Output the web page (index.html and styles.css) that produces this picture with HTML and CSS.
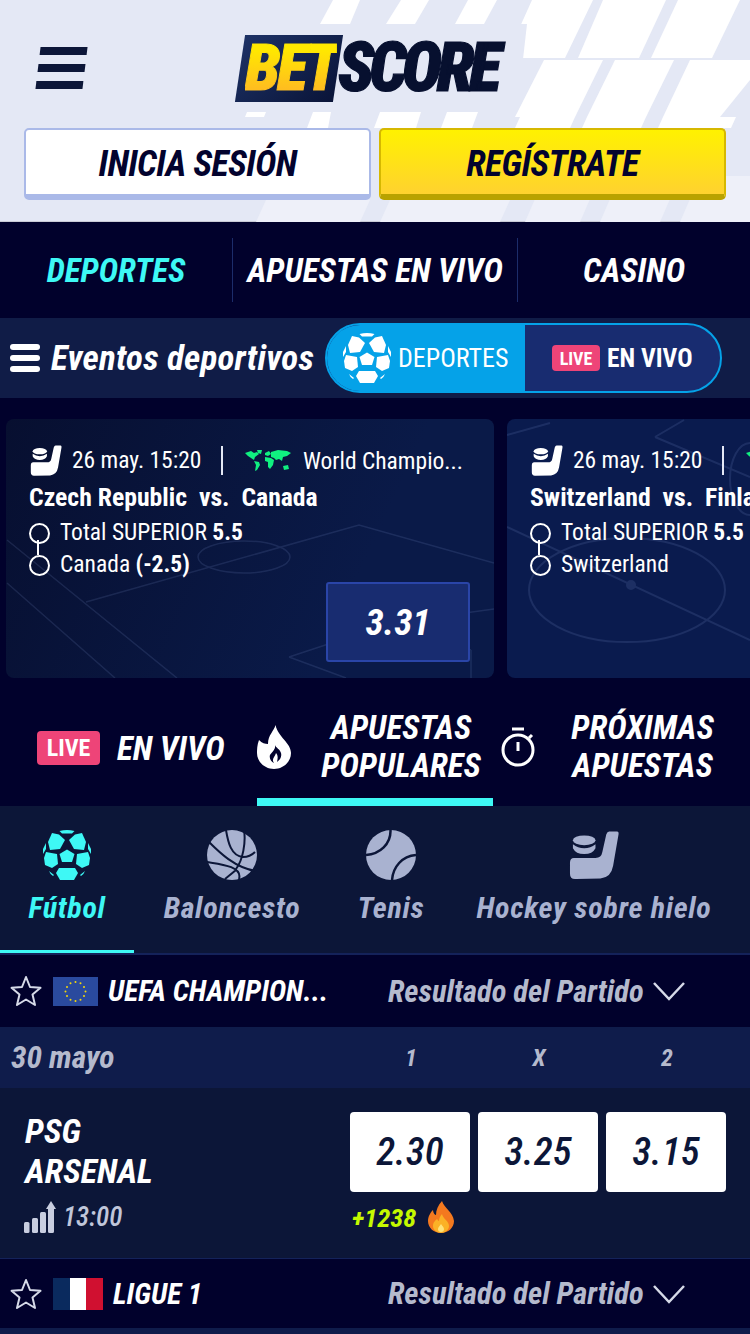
FILE: index.html
```html
<!DOCTYPE html>
<html lang="es">
<head>
  <meta charset="UTF-8">
  <meta name="viewport" content="width=device-width, initial-scale=1.0">
  <title>Betscore</title>
  <link rel="stylesheet" href="styles.css">
</head>
<body>
  <svg class="defs" width="0" height="0">
    <symbol id="ball" viewBox="0 0 50 50">
      <path d="M17.500 1Q25 -1 32.500 1L30 3.500H20Z"/>
      <path d="M10 3L17 4.500 23 10 18 19 8 20 6 12Z"/>
      <path d="M40 3L33 4.500 27 10 32 19 42 20 44 12Z"/>
      <path d="M25 19.500L32.500 24 30 32H20L17.500 24Z"/>
      <path d="M4 22L15 24 16 34 10 38 3 35 2 28Z"/>
      <path d="M46 22L35 24 34 34 40 38 47 35 48 28Z"/>
      <path d="M17 38H33L36 43 32 50H18L14 43Z"/>
      <path d="M1 19L4 13 4 19 1 24Z"/>
      <path d="M49 19L46 13 46 19 49 24Z"/>
      <path d="M7 41L12 45 11 46Q8 44 7 41Z"/>
      <path d="M43 41L38 45 39 46Q42 44 43 41Z"/>
    </symbol>
    <symbol id="puck" viewBox="0 0 51 50">
      <path d="M41 1H49Q51 1 50.500 4L45 36Q43 48 32 49L7 49.500Q1 50 1 44V33Q1 28 5 28H27Q33 28 34 22L38 4Q39 1 41 1Z"/>
      <ellipse cx="15.500" cy="10" rx="11.500" ry="5"/>
      <path d="M4 14Q9 18 15.500 18T27 14V18Q24 24 15.500 24T4 18Z"/>
    </symbol>
    <symbol id="star" viewBox="0 0 32 32">
      <path d="M16 2L20 12 30.500 12.800 22.500 19.500 25 30 16 24.500 7 30 9.500 19.500 1.500 12.800 12 12Z" fill="none" stroke="currentColor" stroke-width="2" stroke-linejoin="round"/>
    </symbol>
    <symbol id="chevron" viewBox="0 0 32 20">
      <path d="M1 2L16 18 31 2" fill="none" stroke="currentColor" stroke-width="2.500"/>
    </symbol>
    <symbol id="pitch-a" viewBox="0 0 488 259">
      <g fill="none" stroke="#8fa6e0" stroke-width="1.500">
        <path d="M80 183L353 106 488 144"/>
        <path d="M1 121L171 259M1 164L109 259"/>
        <ellipse cx="238" cy="138" rx="46" ry="16"/>
        <path d="M283 238L386 204 465 231M283 238L340 259M386 204L488 190M465 231V259"/>
      </g>
    </symbol>
    <symbol id="pitch-b" viewBox="0 0 243 259">
      <g fill="none" stroke="#8fa6e0" stroke-width="2">
        <ellipse cx="120" cy="171" rx="98" ry="52"/>
        <path d="M0 108L243 221M0 16L43 4M148 18L177 1M148 18L243 58"/>
        <circle cx="124" cy="166" r="4" fill="#8fa6e0"/>
        <ellipse cx="243" cy="60" rx="20" ry="36"/>
      </g>
    </symbol>
    <symbol id="map" viewBox="0 0 46 21">
      <path d="M0 3L6 1 9 3 12 2 14 4 10 7 9 10 6 8 3 6Z"/>
      <path d="M12 0L17 0 16 4 13 3Z"/>
      <path d="M9 11L14 12 15 15 12 20 10 21 11 15Z"/>
      <path d="M20 3L24 1 26 4 23 6 20 5Z"/>
      <path d="M26 2L33 0 42 1 46 3 42 6 38 7 37 11 34 9 31 10 29 8 26 7Z"/>
      <path d="M20 7L26 8 29 10 28 15 25 19 23 17 23 12 20 11Z"/>
      <path d="M38 16L43 15 44 19 39 20Z"/>
    </symbol>
  </svg>

  <header class="top">
    <svg class="stripes" viewBox="0 0 750 222" preserveAspectRatio="none">
      <g fill="#fff">
        <path d="M333 0H360L350 24H320Z"/>
        <path d="M401 0H429L415 24H386Z"/>
        <path d="M468 0H497L484 24H455Z"/>
        <path d="M532 0H593L565 58H506Z"/>
        <path d="M603 0H666L639 58H578Z"/>
        <path d="M678 0H740L712 58H651Z"/>
        <path d="M544 60H603L575 117H515Z"/>
        <path d="M615 60H674L646 117H587Z"/>
        <path d="M690 60H750V80L720 117H663Z"/>
        <path d="M247 112H266L264 117H245Z"/>
        <path d="M313 112H331L328 128H307Z"/>
        <path d="M380 112H421L416 128H374Z"/>
        <path d="M447 112H478L472 128H441Z"/>
        <path d="M520 117H575L570 128H515Z"/>
        <path d="M587 117H646L641 128H582Z"/>
        <path d="M663 117H736L731 128H658Z"/>
      </g>
      <path fill="#e4e8f5" d="M236 24H527L517 112H225Z"/>
      <g fill="#eef0f9">
        <path d="M256 222L266 200H370L360 222Z"/>
        <path d="M380 222L390 200H510L500 222Z"/>
        <path d="M525 222L545 176H600L580 222Z"/>
        <path d="M600 222L620 176H680L660 222Z"/>
        <path d="M680 222L700 176H750V222Z"/>
      </g>
    </svg>
    <div class="top-row">
      <div class="burger"><i></i><i></i><i></i></div>
      <div class="logo">
        <span class="logo-bet"><span>BET</span></span>
        <span class="logo-score">SCORE</span>
      </div>
    </div>
    <div class="auth">
      <div class="auth-btn login">INICIA SESIÓN</div>
      <div class="auth-btn signup">REGÍSTRATE</div>
    </div>
  </header>

  <nav class="main-nav">
    <a class="active">DEPORTES</a>
    <a>APUESTAS EN VIVO</a>
    <a>CASINO</a>
  </nav>

  <section class="events-bar">
    <div class="mini-burger"><i></i><i></i><i></i></div>
    <h2>Eventos deportivos</h2>
    <div class="toggle">
      <div class="toggle-sports">
        <svg class="toggle-ball"><use href="#ball"/></svg>
        <span>DEPORTES</span>
      </div>
      <div class="toggle-live">
        <span class="live small">LIVE</span>
        <b>EN VIVO</b>
      </div>
    </div>
  </section>

  <section class="slider">
    <article class="card card-dark">
      <svg class="pitch"><use href="#pitch-a"/></svg>
      <div class="card-head">
        <svg class="card-puck"><use href="#puck"/></svg>
        <span class="card-date">26 may. 15:20</span>
        <i class="sep"></i>
        <svg class="card-map"><use href="#map"/></svg>
        <span class="card-league">World Champio...</span>
      </div>
      <div class="card-teams">Czech Republic&nbsp; vs.&nbsp; Canada</div>
      <div class="legs">
        <div class="leg">Total SUPERIOR <b>5.5</b></div>
        <div class="leg">Canada <b>(-2.5)</b></div>
      </div>
      <div class="card-odd">3.31</div>
    </article>
    <article class="card">
      <svg class="pitch pitch-right"><use href="#pitch-b"/></svg>
      <div class="card-head">
        <svg class="card-puck"><use href="#puck"/></svg>
        <span class="card-date">26 may. 15:20</span>
        <i class="sep"></i>
        <svg class="card-map"><use href="#map"/></svg>
        <span class="card-league">World Champio...</span>
      </div>
      <div class="card-teams">Switzerland&nbsp; vs.&nbsp; Finland</div>
      <div class="legs">
        <div class="leg">Total SUPERIOR <b>5.5</b></div>
        <div class="leg">Switzerland</div>
      </div>
    </article>
  </section>

  <section class="bet-tabs">
    <div class="bet-tab tab-live">
      <span class="live">LIVE</span>
      <span>EN VIVO</span>
    </div>
    <div class="bet-tab tab-popular">
      <svg class="tab-flame" viewBox="0 0 34 44"><path fill="#fff" fill-rule="evenodd" d="M18.500 0C17 6 11 10 11 19 8 19 5 18 2 15 0 20 0 25 0 28 0 37 8 44 17 44 26 44 34 37 34 28 34 18 21 12 18.500 0ZM18 20C19 24 15 27 13 30 12 33 14 37 17 38 14 34 18 32 19 28 21 30 21 33 20 37 23 35 25 32 24 28 23 24 19 23 18 20Z"/></svg>
      <span class="tab-text popular-text">APUESTAS<br>POPULARES</span>
    </div>
    <div class="bet-tab tab-next">
      <svg class="tab-timer" viewBox="0 0 34 40" fill="none" stroke="#fff" stroke-width="3"><circle cx="17" cy="23" r="15"/><path d="M11 2H23M17 15V24M28 11L31 8"/></svg>
      <span class="tab-text">PRÓXIMAS<br>APUESTAS</span>
    </div>
  </section>

  <section class="sports">
    <div class="sport active">
      <svg class="sport-icon"><use href="#ball"/></svg>
      <span>Fútbol</span>
    </div>
    <div class="sport">
      <svg class="sport-icon" viewBox="0 0 50 50"><circle cx="25" cy="25" r="25" fill="currentColor"/><path d="M19 0C21 12 24 26 36 27 41 27 45 25 48 22M37 0C39 12 36 30 29 39M2 12C12 22 28 38 49 41M0 32C12 34 36 36 32 49M18 49L29 40" fill="none" stroke="#0c1638" stroke-width="2"/></svg>
      <span>Baloncesto</span>
    </div>
    <div class="sport">
      <svg class="sport-icon" viewBox="0 0 50 50"><circle cx="25" cy="25" r="25" fill="currentColor"/><path d="M24.500 0C25 14 14 24 0 25M50 25C36 26 27 37 26 50" fill="none" stroke="#0c1638" stroke-width="2.500"/></svg>
      <span>Tenis</span>
    </div>
    <div class="sport">
      <svg class="sport-icon"><use href="#puck"/></svg>
      <span>Hockey sobre hielo</span>
    </div>
  </section>

  <section class="league">
    <svg class="star"><use href="#star"/></svg>
    <svg class="flag-eu" viewBox="0 0 45 29">
      <rect width="45" height="29" fill="#2a4a9e"/>
      <g fill="#f5d90a">
        <circle cx="22.500" cy="5" r="1"/><circle cx="27.500" cy="6.300" r="1"/><circle cx="31" cy="10" r="1"/>
        <circle cx="32.500" cy="14.500" r="1"/><circle cx="31" cy="19" r="1"/><circle cx="27.500" cy="22.700" r="1"/>
        <circle cx="22.500" cy="24" r="1"/><circle cx="17.500" cy="22.700" r="1"/><circle cx="14" cy="19" r="1"/>
        <circle cx="12.500" cy="14.500" r="1"/><circle cx="14" cy="10" r="1"/><circle cx="17.500" cy="6.300" r="1"/>
      </g>
    </svg>
    <span class="league-name">UEFA CHAMPION...</span>
    <span class="market">Resultado del Partido</span>
    <svg class="chevron"><use href="#chevron"/></svg>
  </section>

  <section class="date-row">
    <span class="date-label">30 mayo</span>
    <div class="odds-head"><span>1</span><span>X</span><span>2</span></div>
  </section>

  <section class="match">
    <div class="match-info">
      <div class="team">PSG</div>
      <div class="team">ARSENAL</div>
      <div class="match-time">
        <svg class="signal" viewBox="0 0 32 32" fill="#c9cee0"><rect x="0" y="21" width="5.500" height="11" rx="1.500"/><rect x="8" y="17" width="6" height="15" rx="1.500"/><rect x="16" y="11" width="6" height="21" rx="1.500"/><path d="M24 8H22L27 0 32 8H30V30.500Q30 32 28.500 32H25.500Q24 32 24 30.500Z"/></svg>
        <span>13:00</span>
      </div>
    </div>
    <div class="match-odds">
      <div class="odds">
        <div class="odd">2.30</div>
        <div class="odd">3.25</div>
        <div class="odd">3.15</div>
      </div>
      <div class="hot">
        <span>+1238</span>
        <svg class="hot-flame" viewBox="0 0 26 32">
          <path fill="#f4791f" d="M14 0C16 7 25 11 26 20 26 27 20 32 13 32 6 32 0 27 0 20 0 15 3 11 5 9 5 12 7 14 8 14 8 9 10 4 14 0Z"/>
          <path fill="#fbb126" d="M14 13C15 18 21 20 21 25 21 29 17 32 13 32 9 32 5 29 5 25 5 21 8 19 9 18 10 19 10 20 11 20 11 18 12 15 14 13Z"/>
          <path fill="#ffe27a" d="M13 23C14 25 16 26 16 28 16 30 15 31 13 31 11 31 10 30 10 28 10 26 12 25 13 23Z"/>
        </svg>
      </div>
    </div>
  </section>

  <section class="league league-last">
    <svg class="star"><use href="#star"/></svg>
    <div class="flag-fr"><i></i><i></i><i></i></div>
    <span class="league-name">LIGUE 1</span>
    <span class="market">Resultado del Partido</span>
    <svg class="chevron"><use href="#chevron"/></svg>
  </section>
  <div class="date-row"></div>
</body>
</html>
```

FILE: styles.css
```css
* {
  box-sizing: border-box;
}

html, body {
  margin: 0;
  background-color: #01012c;
}

body {
  width: 750px;
  height: 1334px;
  overflow: hidden;
  font-family: Roboto, "Liberation Sans", sans-serif;
  font-stretch: 75%;
  color: #ffffff;
}

.defs {
  position: absolute;
}

svg {
  display: block;
  flex-shrink: 0;
}

/* header */
.top {
  position: relative;
  height: 222px;
  background-color: #e4e8f5;
  border-bottom: 1px solid #c9cbd6;
  padding: 33px 24px 0;
}

.stripes {
  position: absolute;
  inset: 0;
  width: 750px;
  height: 222px;
}

.top-row {
  position: relative;
  display: flex;
  align-items: center;
  height: 70px;
}

.burger {
  width: 47px;
  margin-left: 14px;
  display: flex;
  flex-direction: column;
  gap: 9px;
  transform: skewX(-7deg);
}

.burger i {
  display: block;
  height: 8px;
  background-color: #0c1638;
}

.logo {
  display: flex;
  align-items: center;
  margin-left: 155px;
}

.logo-bet {
  width: 98px;
  height: 67px;
  padding-left: 3px;
  background: linear-gradient(135deg, #1d3266, #0a1438);
  transform: skewX(-8.600deg);
  display: flex;
  align-items: center;
  justify-content: center;
}

.logo-bet span {
  font-size: 64px;
  font-weight: 900;
  font-style: italic;
  letter-spacing: -3px;
  line-height: 1;
  transform: skewX(8.600deg);
  -webkit-text-stroke: 1px transparent;
  background: linear-gradient(#ffe800 20%, #ffbe1f 80%);
  -webkit-background-clip: text;
  background-clip: text;
  color: transparent;
}

.logo-score {
  font-size: 68px;
  font-weight: 900;
  font-style: italic;
  line-height: 1;
  color: #07102f;
  letter-spacing: -5px;
  -webkit-text-stroke: 1.200px #07102f;
}

.auth {
  position: relative;
  display: flex;
  gap: 8px;
  margin-top: 25px;
}

.auth-btn {
  width: 347px;
  height: 72px;
  padding-top: 4px;
  border-radius: 5px;
  display: flex;
  align-items: center;
  justify-content: center;
  font-size: 36px;
  font-weight: 700;
  font-style: italic;
  letter-spacing: -0.600px;
  color: #03032e;
}

.login {
  background-color: #ffffff;
  border: 2px solid #aab9e8;
  border-bottom-width: 6px;
}

.signup {
  background: linear-gradient(#fff200, #ffd22f);
  border: 2px solid #d6b800;
  border-bottom: 6px solid #b9a200;
}

/* main nav */
.main-nav {
  height: 96px;
  display: flex;
  align-items: center;
  background-color: #01012c;
}

.main-nav a {
  height: 64px;
  display: flex;
  align-items: center;
  justify-content: center;
  font-size: 33px;
  font-weight: 700;
  font-style: italic;
  font-stretch: 76%;
}

.main-nav a:nth-child(1) {
  width: 233px;
  border-right: 1px solid #1c2c6a;
}

.main-nav a:nth-child(2) {
  width: 285px;
  border-right: 1px solid #1c2c6a;
}

.main-nav a:nth-child(3) {
  flex: 1;
}

.main-nav .active {
  color: #3ef8f5;
}

/* events bar */
.events-bar {
  height: 80px;
  display: flex;
  align-items: center;
  padding-left: 10px;
  background-color: #101c47;
}

.mini-burger {
  width: 30px;
  display: flex;
  flex-direction: column;
  gap: 5px;
}

.mini-burger i {
  display: block;
  height: 6px;
  border-radius: 3px;
  background-color: #ffffff;
}

.events-bar h2 {
  margin: 0 0 0 11px;
  width: 274px;
  font-size: 35px;
  font-weight: 700;
  font-style: italic;
  font-stretch: 85%;
  letter-spacing: 0.200px;
  white-space: nowrap;
}

.toggle {
  display: flex;
  width: 397px;
  height: 70px;
  border: 2px solid #05a2e8;
  border-radius: 35px;
  overflow: hidden;
  background-color: #182c70;
}

.toggle-sports {
  width: 198px;
  display: flex;
  align-items: center;
  gap: 6px;
  padding-left: 15px;
  background-color: #05a2e8;
  font-size: 26px;
}

.toggle-ball {
  width: 50px;
  height: 50px;
  fill: #ffffff;
}

.toggle-live {
  flex: 1;
  display: flex;
  align-items: center;
  gap: 7px;
  padding-left: 27px;
}

.toggle-live b {
  font-size: 25.500px;
}

.live {
  display: flex;
  align-items: center;
  justify-content: center;
  width: 63px;
  height: 34px;
  border-radius: 4px;
  background-color: #ee4478;
  font-size: 24px;
  font-weight: 700;
  font-style: normal;
}

.live.small {
  width: 48px;
  height: 26px;
  font-size: 18px;
}

/* featured cards */
.slider {
  height: 280px;
  padding: 21px 0 0 6px;
  display: flex;
  gap: 13px;
  overflow: hidden;
}

.card {
  position: relative;
  flex: 0 0 488px;
  height: 259px;
  padding: 26px 24px 0;
  border-radius: 8px;
  overflow: hidden;
  background-color: #0a1b4e;
}

.card-dark {
  background: linear-gradient(115deg, #070f30, #0a1a48 70%);
}

.pitch {
  position: absolute;
  inset: 0;
  width: 488px;
  height: 259px;
  opacity: 0.14;
}

.pitch-right {
  width: 243px;
}

.card-head {
  position: relative;
  display: flex;
  align-items: center;
  height: 30px;
  font-size: 23.500px;
}

.card-puck {
  width: 32px;
  height: 31px;
  fill: #ffffff;
}

.card-date {
  margin-left: 10px;
  width: 129px;
  white-space: nowrap;
}

.sep {
  width: 2px;
  height: 29px;
  margin-left: 20px;
  background-color: #e4e8f5;
}

.card-map {
  width: 46px;
  height: 21px;
  margin-left: 22px;
  fill: #10f080;
}

.card-league {
  margin-left: 12px;
  padding-top: 2px;
  white-space: nowrap;
}

.card-teams {
  position: relative;
  margin: 7px 0 0 -1px;
  font-size: 25.700px;
  font-weight: 700;
  line-height: 30px;
  white-space: nowrap;
}

.legs {
  position: relative;
  margin: 4px 0 0 -1px;
}

.leg {
  position: relative;
  height: 32px;
  padding-left: 31px;
  font-size: 23.500px;
  line-height: 32px;
  white-space: nowrap;
}

.leg::before {
  content: "";
  position: absolute;
  left: 0;
  top: 7px;
  width: 17px;
  height: 17px;
  border: 2px solid #ffffff;
  border-radius: 50%;
}

.leg:first-child::after {
  content: "";
  position: absolute;
  left: 8px;
  top: 24px;
  width: 2px;
  height: 15px;
  background-color: #ffffff;
}

.card-odd {
  position: absolute;
  left: 320px;
  top: 163px;
  width: 144px;
  height: 80px;
  display: flex;
  align-items: center;
  justify-content: center;
  background-color: #182c70;
  border: 2px solid #2a45a8;
  border-radius: 3px;
  font-size: 37px;
  font-weight: 700;
  font-style: italic;
}

/* bet tabs */
.bet-tabs {
  height: 128px;
  display: flex;
  font-size: 33px;
  font-weight: 700;
  font-style: italic;
  font-stretch: 76%;
}

.bet-tab {
  display: flex;
  align-items: center;
  padding-top: 10px;
}

.tab-live {
  width: 257px;
  padding-left: 37px;
  padding-top: 12px;
  gap: 17px;
}

.tab-popular {
  width: 236px;
  border-bottom: 8px solid #3ef8f5;
  padding-top: 17px;
}

.tab-next {
  flex: 1;
  padding-left: 8px;
}

.tab-text {
  flex: 1;
  text-align: center;
  line-height: 38px;
}

.popular-text {
  padding-left: 18px;
}

.tab-flame {
  width: 34px;
  height: 44px;
}

.tab-timer {
  width: 34px;
  height: 40px;
}

/* sports row */
.sports {
  height: 149px;
  display: flex;
  background-color: #0c1638;
  border-bottom: 2px solid #14225a;
  color: #a9b2d0;
  font-size: 30px;
  font-weight: 700;
  font-style: italic;
  font-stretch: 82%;
  letter-spacing: 0.700px;
}

.sport {
  display: flex;
  flex-direction: column;
  align-items: center;
  padding-top: 24px;
  white-space: nowrap;
}

.sport:nth-child(1) {
  width: 134px;
  color: #3ef8f5;
  border-bottom: 3px solid #3ef8f5;
  height: 147px;
}

.sport:nth-child(2) {
  width: 196px;
}

.sport:nth-child(3) {
  width: 122px;
}

.sport:nth-child(4) {
  flex: 1;
  padding-right: 14px;
}

.sport-icon {
  width: 50px;
  height: 50px;
  fill: currentColor;
  margin-bottom: 10px;
}

/* league + match */
.league {
  height: 72px;
  display: flex;
  align-items: center;
  padding-left: 10px;
  background-color: #01012c;
  font-style: italic;
  font-size: 29.300px;
  font-weight: 700;
}

.league-last {
  height: 69px;
}

.star {
  width: 32px;
  height: 32px;
  color: #d6dae8;
}

.flag-eu {
  width: 45px;
  height: 29px;
  margin-left: 11px;
}

.flag-fr {
  width: 50px;
  height: 32px;
  margin-left: 11px;
  display: flex;
}

.flag-fr i {
  flex: 1;
  background-color: #0a2a5e;
}

.flag-fr i:nth-child(2) {
  background-color: #ffffff;
}

.flag-fr i:nth-child(3) {
  background-color: #d01030;
}

.league-name {
  margin-left: 10px;
  width: 280px;
  white-space: nowrap;
}

.league-last .league-name {
  width: 275px;
}

.market {
  color: #b5bacd;
  white-space: nowrap;
  width: 265px;
  font-size: 30.500px;
}

.chevron {
  width: 32px;
  height: 20px;
  color: #d6dae8;
}

.date-row {
  height: 61px;
  display: flex;
  align-items: center;
  justify-content: space-between;
  padding: 0 23px 0 11px;
  background-color: #0f1c4b;
  color: #b5bacd;
  font-style: italic;
  font-weight: 700;
  font-size: 31.500px;
  font-stretch: 85%;
}

.odds-head {
  display: flex;
  width: 376px;
  gap: 8px;
  font-size: 24px;
}

.odds-head span {
  flex: 1;
  text-align: center;
}

.match {
  height: 171px;
  display: flex;
  justify-content: space-between;
  padding: 23px 24px 0 25px;
  background-color: #0c1638;
  border-bottom: 1px solid #14225a;
}

.team {
  font-size: 34px;
  font-weight: 700;
  font-style: italic;
  line-height: 40px;
}

.match-time {
  display: flex;
  align-items: center;
  gap: 7px;
  margin-top: 10px;
  margin-left: -1px;
  color: #c0c6da;
  font-size: 27px;
  font-style: italic;
  font-weight: 500;
}

.signal {
  width: 32px;
  height: 32px;
}

.match-odds {
  width: 376px;
  margin-top: 1px;
}

.odds {
  display: flex;
  gap: 8px;
}

.odd {
  flex: 1;
  height: 80px;
  display: flex;
  align-items: center;
  justify-content: center;
  background-color: #ffffff;
  border-radius: 4px;
  color: #0c1638;
  font-size: 39px;
  font-weight: 500;
  font-style: italic;
}

.hot {
  display: flex;
  align-items: center;
  gap: 12px;
  margin-top: 9px;
  padding-left: 2px;
  color: #c5f900;
  font-size: 26.500px;
  font-weight: 700;
  font-style: italic;
}

.hot-flame {
  width: 26px;
  height: 32px;
}
```
